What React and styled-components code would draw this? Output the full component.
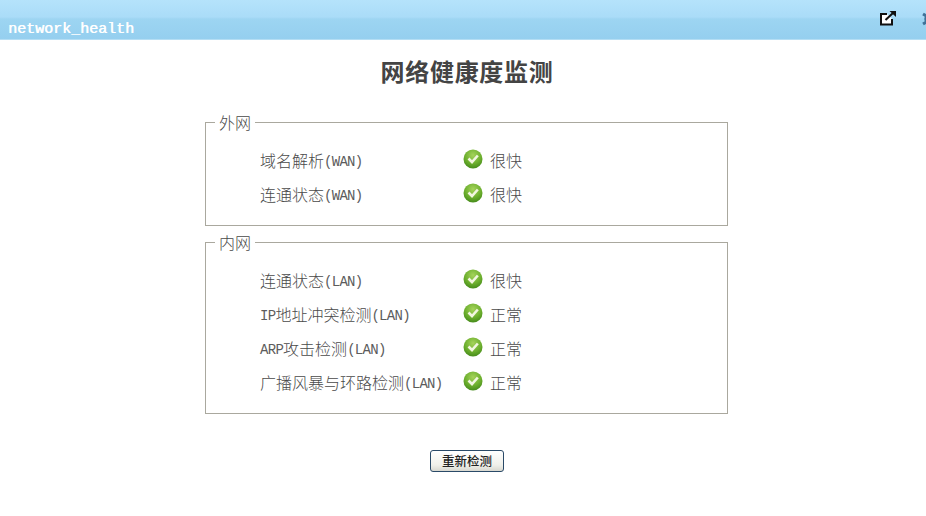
import React from 'react';
import styled, { createGlobalStyle } from 'styled-components';

const cjk = '"Noto Sans CJK SC", "Noto Sans CJK JP", sans-serif';

const GlobalStyle = createGlobalStyle`
  html, body {
    margin: 0;
    padding: 0;
    background: #fff;
    overflow: hidden;
  }
  body {
    font-family: ${cjk};
  }
`;

const Page = styled.div`
  width: 926px;
  height: 516px;
  display: flex;
  flex-direction: column;
  overflow: hidden;
`;

const Header = styled.header`
  box-sizing: border-box;
  width: 100%;
  height: 40px;
  flex: none;
  display: flex;
  align-items: flex-start;
  justify-content: space-between;
  padding: 21px 0 0 8px;
  background: linear-gradient(#b5e3fb 0, #aadcf8 17px, #9dd5f2 19px, #95cfef 39px, #d5edf9 40px);
`;

const HeaderTitle = styled.span`
  font-family: "Liberation Mono", monospace;
  font-size: 15px;
  line-height: 17px;
  color: #fff;
  text-shadow: 0.5px 0 0 #fff;
`;

const HeaderTools = styled.div`
  display: flex;
  gap: 24px;
  margin-top: -11px;
  margin-right: -9px;
`;

const Content = styled.main`
  padding-left: 8px;
  display: flex;
  flex-direction: column;
  align-items: center;
`;

const Title = styled.h1`
  margin: 15px 0 0;
  font-size: 24px;
  line-height: 32px;
  font-weight: 700;
  letter-spacing: 0.7px;
  color: #444;
`;

const Group = styled.fieldset`
  box-sizing: border-box;
  width: 523px;
  height: ${(p) => p.$height}px;
  margin: ${(p) => p.$top}px 0 0 -1px;
  padding: 0;
  border: 1px solid #aaa89e;
  display: flex;
  flex-direction: column;
`;

const GroupLabel = styled.legend`
  margin-left: 9px;
  padding: 0 4px;
  font-size: 16px;
  line-height: 20px;
  font-weight: 300;
  color: #4a4a4a;
`;

const Rows = styled.div`
  padding: ${(p) => p.$top}px 0 0 54px;
  display: flex;
  flex-direction: column;
  gap: 10px;
`;

const Row = styled.div`
  height: 24px;
  display: flex;
  align-items: center;
  font-size: 16px;
  font-weight: 300;
  color: #4a4a4a;
`;

const RowName = styled.span`
  width: 203px;
  flex: none;
`;

const Latin = styled.span`
  font-family: "Liberation Mono", monospace;
  font-size: 14px;
  letter-spacing: -0.7px;
  vertical-align: 1px;
  color: #5c5c5c;
`;

const StatusIcon = styled.svg`
  width: 20px;
  height: 20px;
  margin-right: 7px;
  margin-top: -2px;
  flex: none;
`;

const RecheckButton = styled.button`
  box-sizing: border-box;
  width: 74px;
  height: 22px;
  margin-top: 36px;
  padding: 0;
  border: 1px solid #2a4a68;
  border-radius: 3px;
  background: linear-gradient(#fff, #f0f0ea 70%, #d8d8d0);
  font-family: ${cjk};
  font-size: 12.5px;
  font-weight: 500;
  line-height: 20px;
  color: #222;
`;

const Check = () => (
  <StatusIcon viewBox="0 0 20 20">
    <defs>
      <radialGradient id="okBall" cx="50%" cy="30%" r="75%">
        <stop offset="0" stopColor="#a5d35a" />
        <stop offset="0.6" stopColor="#6aad2c" />
        <stop offset="1" stopColor="#3f8518" />
      </radialGradient>
    </defs>
    <circle cx="10" cy="10" r="9.5" fill="url(#okBall)" />
    <path d="M5.5 9.5 L9 13 L14.8 6.5" fill="none" stroke="#f2f6e0" strokeWidth="2.6" />
  </StatusIcon>
);

const ExternalIcon = () => (
  <svg width="18" height="16" viewBox="0 0 18 16">
    <path d="M8 4 H2 V14.5 H13 V9" fill="#fff" stroke="#111" strokeWidth="2" />
    <path d="M6.5 10 L14 3" fill="none" stroke="#111" strokeWidth="2" />
    <path d="M10.5 1 H17 V7 Z" fill="#111" />
  </svg>
);

const GearIcon = () => (
  <svg width="14" height="18" viewBox="0 0 14 18">
    <circle cx="9" cy="9" r="4" fill="none" stroke="#3f7298" strokeWidth="3.5" />
    <path d="M9 1 V17 M2 4 L7 7 M2 14 L7 11" stroke="#3f7298" strokeWidth="3" />
  </svg>
);

const wan = [
  { name: '域名解析', net: '(WAN)', status: '很快' },
  { name: '连通状态', net: '(WAN)', status: '很快' },
];

const lan = [
  { name: '连通状态', net: '(LAN)', status: '很快' },
  { name: 'IP地址冲突检测', net: '(LAN)', status: '正常' },
  { name: 'ARP攻击检测', net: '(LAN)', status: '正常' },
  { name: '广播风暴与环路检测', net: '(LAN)', status: '正常' },
];

// IP and ARP are drawn in the same half-width face as the bracket text
const splitName = (name) => {
  const m = name.match(/^([A-Z]+)(.*)$/);
  if (!m) return name;
  return (
    <>
      <Latin>{m[1]}</Latin>
      {m[2]}
    </>
  );
};

const CheckRow = ({ item }) => (
  <Row>
    <RowName>
      {splitName(item.name)}
      <Latin>{item.net}</Latin>
    </RowName>
    <Check />
    <span>{item.status}</span>
  </Row>
);

export default function App() {
  return (
    <Page>
      <GlobalStyle />
      <Header>
        <HeaderTitle>network_health</HeaderTitle>
        <HeaderTools>
          <ExternalIcon />
          <GearIcon />
        </HeaderTools>
      </Header>
      <Content>
        <Title>网络健康度监测</Title>
        <Group $height={114} $top={25}>
          <GroupLabel>外网</GroupLabel>
          <Rows $top={16}>
            {wan.map((item) => (
              <CheckRow key={item.name} item={item} />
            ))}
          </Rows>
        </Group>
        <Group $height={182} $top={6}>
          <GroupLabel>内网</GroupLabel>
          <Rows $top={16}>
            {lan.map((item) => (
              <CheckRow key={item.name} item={item} />
            ))}
          </Rows>
        </Group>
        <RecheckButton>重新检测</RecheckButton>
      </Content>
    </Page>
  );
}
